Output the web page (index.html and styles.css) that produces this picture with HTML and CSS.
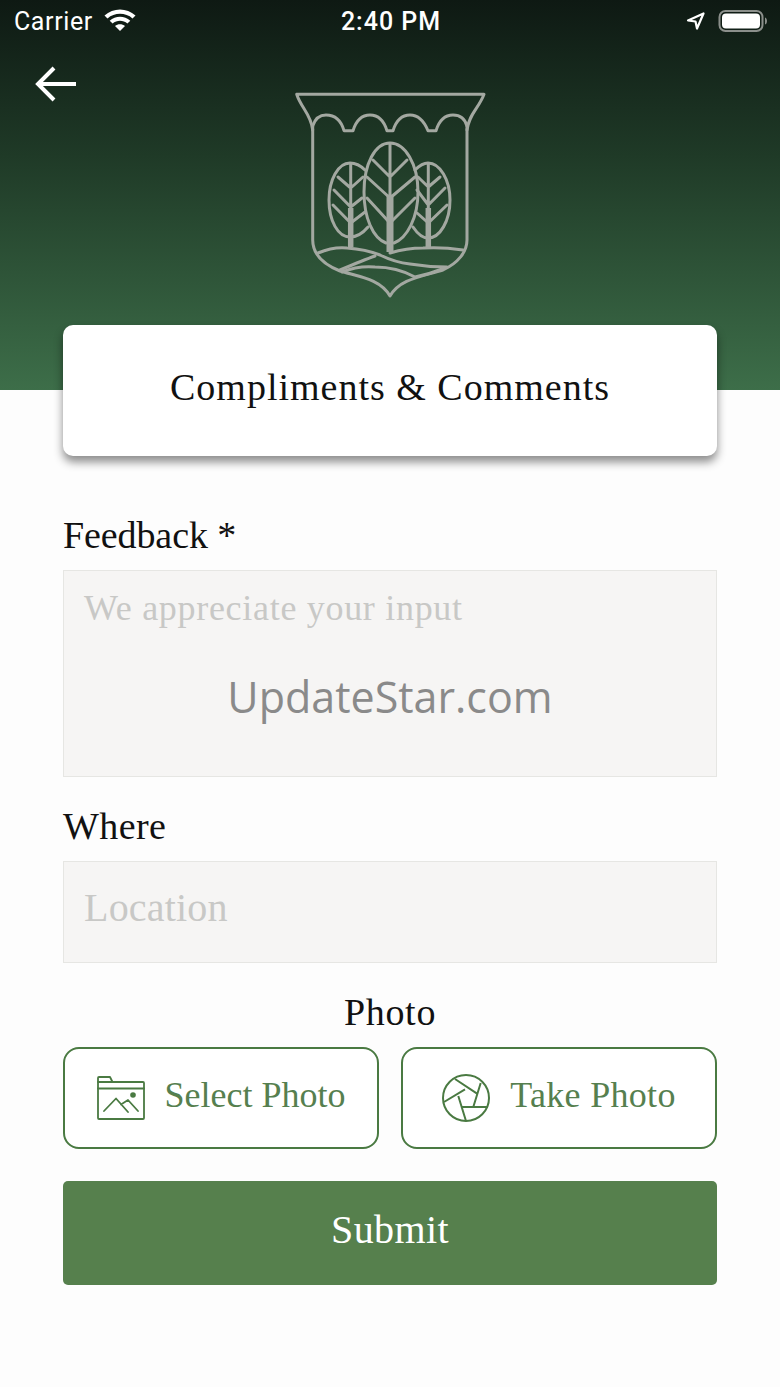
FILE: index.html
```html
<!DOCTYPE html>
<html lang="en">
  <head>
    <meta charset="UTF-8" />
    <title>Compliments &amp; Comments</title>
    <link rel="stylesheet" href="styles.css">
  </head>
  <body>
    <div class="hero">
      <div class="status-bar">
        <div class="status-left">
          <span>Carrier</span>
          <svg class="wifi" viewBox="0 0 32 24" width="32" height="24">
            <path d="M16 22l-5-5c2.800-2.500 7.200-2.500 10 0z" fill="#fff" />
            <path d="M8.600 14.600l-2.900-2.900c5.800-5.200 14.800-5.200 20.600 0l-2.900 2.900c-4.200-3.700-10.600-3.700-14.800 0z" fill="#fff" />
            <path d="M3.500 9.500L.5 6.500c8.800-8 22.200-8 31 0l-3 3c-7-6.200-18-6.200-25 0z" fill="#fff" />
          </svg>
        </div>
        <div class="status-time">2:40 PM</div>
        <div class="status-right">
          <svg viewBox="0 0 20 20" width="20" height="20">
            <path d="M2 9.500L17.500 2.500 11 17.500 9.500 10.500z" fill="none" stroke="#fff" stroke-width="2.200" stroke-linejoin="round" />
          </svg>
          <svg viewBox="0 0 50 24" width="50" height="24">
            <rect x="1.500" y="2" width="43" height="20" rx="6" fill="none" stroke="#8b8f8b" stroke-width="2" />
            <rect x="4" y="4.500" width="38" height="15" rx="4" fill="#fff" />
            <path d="M47 8.500c1.500.5 2 2 2 3.500s-.5 3-2 3.500z" fill="#8b8f8b" />
          </svg>
        </div>
      </div>
      <svg class="back" viewBox="0 0 44 38" width="44" height="38">
        <path d="M42 19H5M20 3L4 19l16 16" fill="none" stroke="#fff" stroke-width="4" />
      </svg>
      <svg class="crest" viewBox="0 0 220 230" width="220" height="230">
        <g fill="none" stroke="#a3a8a1" stroke-width="3" stroke-linejoin="round" stroke-linecap="round">
          <path d="M32.700 50C31 34 21 28 16.700 14.300H204C199 28 189 34 187 50" />
          <path d="M32.700 46V160C32.700 172 40 183 60 191C80 197 100 199 110 216C120 199 140 197 163 190C178 183 187 172 187 160V46" />
          <path d="M32.700 46C35 39 40 35 46 35C55 35 61 40 64 50.700H73C76 41 82 35 90 35C98 35 104 41 107 50.700H113C116 41 122 35 130 35C138 35 144 41 148 50.700H156C159 41 165 35 173 35C180 35 185 39 187 46" />
          <path d="M106 163C93 158 84 138 84 112C84 84 95 63 110 63C125 63 138 84 138 112C138 138 127 158 114 163" />
          <path d="M85 90C81 86 76 83 70 83C58 83 49 100 49 120C49 141 58 157 70 157C77 157 83 153 88 147" />
          <path d="M135 90C139 86 143 83 148 83C160 83 170 100 170 120C170 141 160 158 148 158C142 158 137 153 133 147" />
          <path d="M110 64V120M93 80L110 97L127 80M87 97L110 118L135 97M87 118L109 142M135 118L111 142" />
          <path d="M70.700 84V130M58 97L70.700 108L83 97M54 110L70.700 127L82 118M53 125L70.700 143L85 132" />
          <path d="M148.300 84V130M138 97L148.300 107L160 97M137 110L148.300 125L165 108M137 133L148.300 143L167 125" />
          <path d="M38 173C50 168 58 167 67 168C80 169 90 171 100 175C110 180 120 183 130 184C142 186 155 187 167 187" />
          <path d="M110 173C120 170 132 168 143 168C157 167 170 168 183 170" />
          <path d="M60 190C72 185 84 180 95 176" />
          <path d="M62 192C72 188 84 186 95 187C110 187 124 191 135 197C145 195 155 192 165 188" />
        </g>
        <g fill="none" stroke="#a3a8a1">
          <path d="M110 116V172" stroke-width="7" />
          <path d="M70.700 128V167" stroke-width="5.500" />
          <path d="M148.300 128V167" stroke-width="5.500" />
        </g>
      </svg>
    </div>

    <div class="page">
      <div class="title-card">Compliments &amp; Comments</div>

      <div class="label first">Feedback *</div>
      <div class="field field-large">
        <span class="placeholder">We appreciate your input</span>
        <span class="watermark">UpdateStar.com</span>
      </div>

      <div class="label">Where</div>
      <div class="field field-small">
        <span class="placeholder">Location</span>
      </div>

      <div class="label center">Photo</div>
      <div class="photo-row">
        <div class="photo-btn">
          <svg viewBox="0 0 48 44" width="48" height="44">
            <g fill="none" stroke="#4a7a42" stroke-width="1.800" stroke-linejoin="round" stroke-linecap="round">
              <path d="M1 42V2C1 1.500 1.500 1 2 1H13L15.500 6H46C46.500 6 47 6.500 47 7V42C47 42.500 46.500 43 46 43H2C1.500 43 1 42.500 1 42z" />
              <path d="M1 6H15.500M1 12.500H47" />
              <path d="M7 35L19 22.500L31 36M24 28.500L31 24L41 35" />
            </g>
            <circle cx="36" cy="19" r="2.800" fill="#4a7a42" />
          </svg>
          <span>Select Photo</span>
        </div>
        <div class="photo-btn take">
          <svg viewBox="0 0 48 48" width="48" height="48">
            <g fill="none" stroke="#4a7a42" stroke-width="2" stroke-linejoin="round">
              <circle cx="24" cy="24" r="23" />
              <path d="M13 5L34.700 19.300M38.700 9L31.300 33M46 33H19.300M24 47L16.300 22M2 28L23 15.300" />
            </g>
          </svg>
          <span>Take Photo</span>
        </div>
      </div>

      <div class="submit-btn"><span>Submit</span></div>
    </div>
  </body>
</html>
```

FILE: styles.css
```css
* {
  box-sizing: border-box;
}

body {
  margin: 0;
  background-color: #fdfdfd;
  font-family: "Liberation Serif", serif;
  color: #111;
}

/* top green area */
.hero {
  position: relative;
  height: 390px;
  background: linear-gradient(to bottom, #0e1913 0%, #1f3a27 40%, #3d6e49 100%);
  display: flex;
  flex-direction: column;
  align-items: center;
}

.status-bar {
  width: 100%;
  height: 44px;
  padding: 0 12px 2px 14px;
  display: flex;
  align-items: center;
  color: #fff;
  font-family: Roboto, sans-serif;
  font-size: 25px;
  letter-spacing: 0.6px;
}

.status-left,
.status-right {
  flex: 1;
  display: flex;
  align-items: center;
}

.status-left {
  gap: 11px;
}

.status-right {
  justify-content: flex-end;
  gap: 12px;
}

.status-time {
  font-weight: 500;
  letter-spacing: 1px;
}

.back {
  position: absolute;
  top: 65px;
  left: 34px;
}

.crest {
  margin-top: 36px;
}

.page {
  padding: 0 63px;
}

.title-card {
  height: 131px;
  margin-top: -65px;
  padding-bottom: 8px;
  position: relative;
  background-color: #fff;
  border-radius: 10px;
  box-shadow: 0 6px 10px rgba(0, 0, 0, 0.45);
  display: flex;
  justify-content: center;
  align-items: center;
  font-size: 38px;
  letter-spacing: 1px;
  color: #111;
}

.label {
  height: 56px;
  margin-top: 28px;
  font-size: 38px;
  line-height: 42px;
  letter-spacing: 0.4px;
}

.label.first {
  margin-top: 58px;
  letter-spacing: -0.1px;
}

.label.center {
  text-align: center;
  letter-spacing: 0.7px;
}

.field {
  position: relative;
  background-color: #f6f5f4;
  border: 1px solid #e6e6e3;
  padding: 0 20px;
  color: #c8c8c6;
}

.field-large {
  height: 207px;
  padding-top: 16px;
  font-size: 36px;
  letter-spacing: 0.7px;
}

.field-small {
  height: 102px;
  padding-top: 22px;
  font-size: 40px;
  letter-spacing: 0.2px;
}

.watermark {
  position: absolute;
  top: 96px;
  left: 0;
  width: 100%;
  text-align: center;
  font-family: "Open Sans", sans-serif;
  font-size: 43px;
  letter-spacing: 0;
  color: #8a8a8a;
}

.photo-row {
  display: flex;
  gap: 22px;
}

.photo-btn {
  flex: 1;
  height: 102px;
  padding-bottom: 6px;
  background-color: #fff;
  border: 2px solid #4a7a42;
  border-radius: 16px;
  display: flex;
  justify-content: center;
  align-items: center;
  gap: 20px;
  font-size: 36px;
  color: #567f4f;
}

.photo-btn.take {
  letter-spacing: 0.3px;
}

.photo-btn svg {
  margin-top: 6px;
}

.submit-btn {
  height: 104px;
  margin-top: 32px;
  padding-bottom: 8px;
  background-color: #56804d;
  border-radius: 5px;
  display: flex;
  justify-content: center;
  align-items: center;
  font-size: 40px;
  letter-spacing: 0.4px;
  color: #fff;
}
```
